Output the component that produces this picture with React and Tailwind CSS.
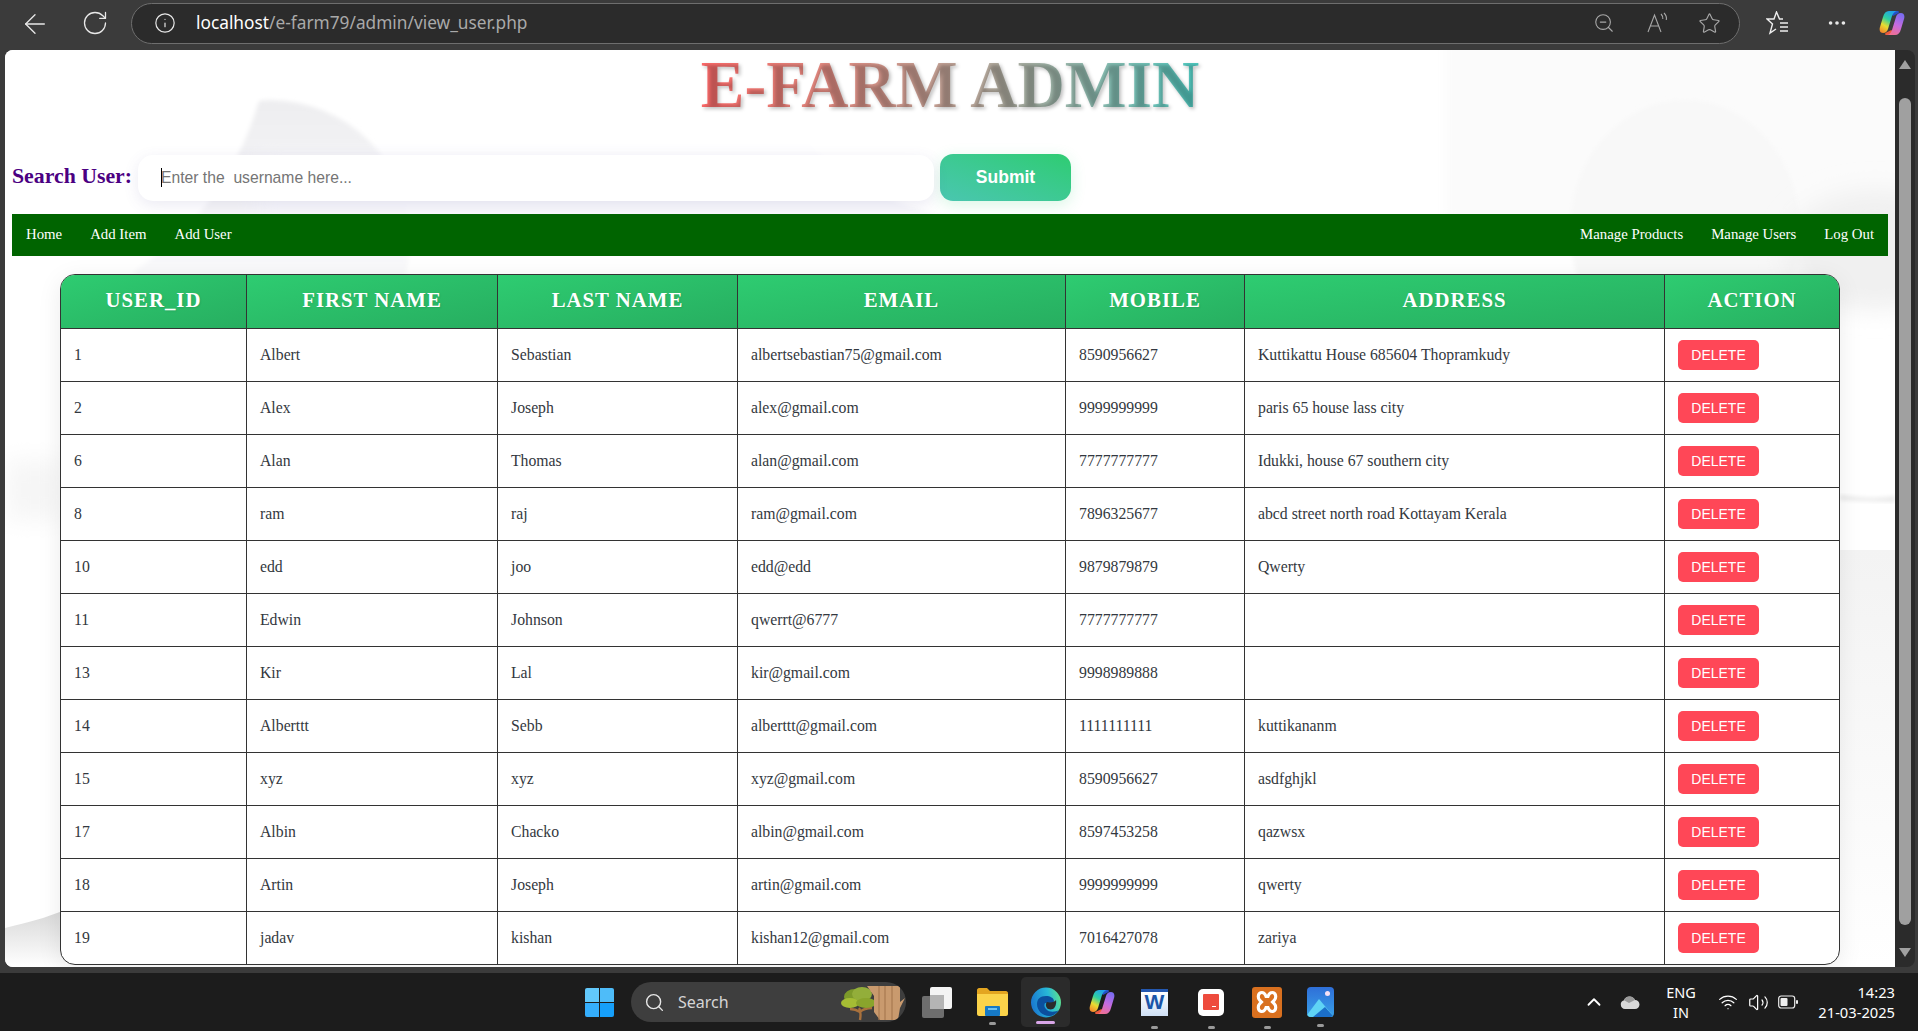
import { ArrowLeft, RotateCw, Info, ZoomOut, Star, MoreHorizontal, ChevronUp, Search, Wifi, Volume2 } from "lucide-react";

const users = [
  ["1", "Albert", "Sebastian", "albertsebastian75@gmail.com", "8590956627", "Kuttikattu House 685604 Thopramkudy"],
  ["2", "Alex", "Joseph", "alex@gmail.com", "9999999999", "paris 65 house lass city"],
  ["6", "Alan", "Thomas", "alan@gmail.com", "7777777777", "Idukki, house 67 southern city"],
  ["8", "ram", "raj", "ram@gmail.com", "7896325677", "abcd street north road Kottayam Kerala"],
  ["10", "edd", "joo", "edd@edd", "9879879879", "Qwerty"],
  ["11", "Edwin", "Johnson", "qwerrt@6777", "7777777777", ""],
  ["13", "Kir", "Lal", "kir@gmail.com", "9998989888", ""],
  ["14", "Alberttt", "Sebb", "alberttt@gmail.com", "1111111111", "kuttikananm"],
  ["15", "xyz", "xyz", "xyz@gmail.com", "8590956627", "asdfghjkl"],
  ["17", "Albin", "Chacko", "albin@gmail.com", "8597453258", "qazwsx"],
  ["18", "Artin", "Joseph", "artin@gmail.com", "9999999999", "qwerty"],
  ["19", "jadav", "kishan", "kishan12@gmail.com", "7016427078", "zariya"],
];

const headers = ["USER_ID", "FIRST NAME", "LAST NAME", "EMAIL", "MOBILE", "ADDRESS", "ACTION"];
const widths = [186, 251, 240, 328, 179, 420, 174];

const Copilot = ({ id, size = 30 }) => (
  <svg width={size} height={size} viewBox="0 0 30 30">
    <defs>
      <linearGradient id={`${id}a`} x1="0.7" y1="0" x2="0.2" y2="1">
        <stop offset="0" stopColor="#1f9df0" />
        <stop offset="0.4" stopColor="#2fd0a0" />
        <stop offset="0.7" stopColor="#e8dc30" />
        <stop offset="1" stopColor="#f58a2a" />
      </linearGradient>
      <linearGradient id={`${id}b`} x1="0.7" y1="0" x2="0.3" y2="1">
        <stop offset="0" stopColor="#7a6cf0" />
        <stop offset="0.5" stopColor="#c56be0" />
        <stop offset="1" stopColor="#f2708f" />
      </linearGradient>
    </defs>
    <path d="M12 3h9c1 0 1 1 .6 2L16 8z" fill="#2450c8" />
    <path d="M18 27H9c-1 0-1-1-.6-2l6-3z" fill="#ee5a3a" />
    <path d="M12 3h9c-3 0-5 2-6 5l-4 13c-.6 2-2 4-5 4-3 0-4-3-3-6l3-10c1-4 3-6 6-6z" fill={`url(#${id}a)`} />
    <path d="M18 27H9c3 0 5-2 6-5l4-13c.6-2 2-4 5-4 3 0 4 3 3 6l-3 10c-1 4-3 6-6 6z" fill={`url(#${id}b)`} />
  </svg>
);

const Dot = ({ className }) => <div className={`absolute w-[7px] h-[3px] rounded-full bg-[#9a9a9a] ${className}`} />;

const TopBar = () => (
  <div className="h-[50px] shrink-0 bg-[#3b3b3b] flex items-center text-[#e8e8e8]">
    <ArrowLeft className="ml-[19px] w-[32px] h-[32px] -mt-[2px]" strokeWidth={1} />
    <RotateCw className="ml-[30px] w-[28px] h-[28px] -mt-[4px]" strokeWidth={1.1} />
    <div className="ml-[22px] h-[41px] w-[1609px] -mt-[4px] rounded-full border border-[#6e6e6e] bg-[#2b2b2b] flex items-center">
      <Info className="ml-[22px] w-[22px] h-[22px]" strokeWidth={1.3} />
      <div className="ml-[20px] text-[17.300px] font-['Noto_Sans',sans-serif] text-[#a9a9a9]">
        <span className="text-white">localhost</span>/e-farm79/admin/view_user.php
      </div>
      <div className="ml-auto flex items-center text-[#a8a8a8]">
        <ZoomOut className="w-[22px] h-[22px]" strokeWidth={1.2} />
        <svg className="ml-[31px]" width="22" height="22" viewBox="0 0 22 22" fill="none" stroke="currentColor" strokeWidth="1.1">
          <path d="M2 20 8.500 3 15 20M4.500 14h8M15 2c1.500 1.500 2 3 1.800 5M18 1c2 2 2.800 4.500 2.300 7" />
        </svg>
        <Star className="ml-[30px] mr-[18px] w-[23px] h-[23px]" strokeWidth={1.2} />
      </div>
    </div>
    <svg className="ml-[26px] -mt-[4px]" width="24" height="24" viewBox="0 0 24 24" fill="none" stroke="#eee" strokeWidth="1.4">
      <path d="M17 8h-3.500L10.500 1 8 8H1l5.500 5L4 22l6-4M14 12h8M14 16h8M14 20h8" />
    </svg>
    <MoreHorizontal className="ml-[36px] w-[22px] h-[22px] -mt-[4px]" strokeWidth={2} />
    <div className="ml-[29px] -mt-[4px]"><Copilot id="top" /></div>
  </div>
);

const Background = () => (
  <svg className="absolute inset-0 w-full h-full" viewBox="0 0 1890 917" preserveAspectRatio="none">
    <defs>
      <filter id="bl" x="-30%" y="-30%" width="160%" height="160%"><feGaussianBlur stdDeviation="12" /></filter>
      <filter id="bs" x="-20%" y="-20%" width="140%" height="140%"><feGaussianBlur stdDeviation="2" /></filter>
      <filter id="bm" x="-20%" y="-20%" width="140%" height="140%"><feGaussianBlur stdDeviation="6" /></filter>
      <linearGradient id="wedge" x1="0" y1="0" x2="0" y2="1">
        <stop offset="0" stopColor="#eeeef0" />
        <stop offset="0.5" stopColor="#f8f8fa" />
        <stop offset="1" stopColor="#fcfcfd" />
      </linearGradient>
      <linearGradient id="rightFade" x1="0" y1="0" x2="0" y2="1">
        <stop offset="0" stopColor="#f3f3f3" />
        <stop offset="1" stopColor="#ffffff" />
      </linearGradient>
      <linearGradient id="leftFade" x1="0" y1="0" x2="0" y2="1">
        <stop offset="0" stopColor="#d8d8d8" />
        <stop offset="1" stopColor="#ffffff" />
      </linearGradient>
    </defs>
    <rect width="1890" height="917" fill="#ffffff" />
    <rect x="1440" y="-20" width="470" height="190" fill="#fbfbfb" filter="url(#bm)" />
    <circle cx="265" cy="190" r="140" fill="url(#wedge)" filter="url(#bs)" />
    <rect x="250" y="110" width="800" height="60" fill="#f7f7fb" filter="url(#bl)" />
    <circle cx="995" cy="-100" r="272" fill="#ffffff" filter="url(#bs)" />
    <circle cx="-35" cy="-30" r="300" fill="#ffffff" filter="url(#bs)" />
    <ellipse cx="1680" cy="180" rx="115" ry="130" fill="#f8f8f8" filter="url(#bs)" />
    <ellipse cx="1870" cy="200" rx="90" ry="60" fill="#f0f0f0" filter="url(#bl)" />
    <rect x="0" y="410" width="60" height="60" fill="#f6f6f6" filter="url(#bl)" />
    <path d="M1835 445 C1850 447 1870 450 1890 446 L1890 452 L1835 450Z" fill="#e8e8e8" filter="url(#bs)" />
    <rect x="1835" y="500" width="55" height="417" fill="url(#rightFade)" />
    <path d="M0 878 C25 872 40 868 60 860 L60 917 L0 917Z" fill="url(#leftFade)" />
  </svg>
);

const Header = () => (
  <div className="relative">
    <div className="h-[104px] flex justify-center">
      <h1 className="h-[68px] scale-x-[0.955] text-[68.500px] leading-[68px] font-bold font-['Liberation_Serif',serif] text-transparent bg-clip-text bg-gradient-to-r from-[#ff6b6b] to-[#4ecdc4] w-fit [text-shadow:2px_2px_4px_rgba(0,0,0,0.25)]">
        E-FARM ADMIN
      </h1>
    </div>
    <div className="flex items-center h-[47px] pl-[7px]">
      <label className="w-[126px] -mt-[2px] text-[21.800px] font-bold text-[#4b0082] font-['Liberation_Serif',serif]">Search User:</label>
      <div className="relative">
        <input
          className="w-[796px] h-[46px] mt-[1px] rounded-[15px] bg-white pl-[23px] text-[15.700px] font-['Liberation_Sans',sans-serif] outline-none shadow-[0_4px_15px_rgba(90,80,160,0.12)] placeholder:text-[#757575]"
          placeholder="Enter the  username here..."
        />
        <div className="absolute left-[23px] top-[14px] w-[1px] h-[19px] bg-black" />
      </div>
      <button className="ml-[6px] w-[131px] h-[47px] rounded-[13px] bg-gradient-to-tr from-[#4ac6b0] to-[#2ecc71] text-white text-[17.500px] font-bold font-['Liberation_Sans',sans-serif] shadow-[0_4px_15px_rgba(46,204,113,0.18)]">
        Submit
      </button>
    </div>
  </div>
);

const Nav = () => (
  <div className="mt-[13px] mx-[7px] h-[42px] pb-[2px] bg-[#006400] text-white text-[14.800px] font-['Liberation_Serif',serif] flex items-center justify-between">
    <div className="flex">
      {["Home", "Add Item", "Add User"].map((n) => (
        <a key={n} className="px-[14px]">{n}</a>
      ))}
    </div>
    <div className="flex">
      {["Manage Products", "Manage Users", "Log Out"].map((n) => (
        <a key={n} className="px-[14px]">{n}</a>
      ))}
    </div>
  </div>
);

const UserTable = () => (
  <div className="mt-[18px] ml-[55px] mr-[55px] border border-[#333] rounded-[15px] overflow-hidden shadow-[0_5px_25px_rgba(0,0,0,0.08)] bg-white">
    <table className="w-full table-fixed border-separate border-spacing-0 font-['Liberation_Serif',serif] text-[15.750px] text-[#333840]">
      <colgroup>
        {widths.map((w, i) => (
          <col key={i} style={{ width: w }} />
        ))}
      </colgroup>
      <thead>
        <tr>
          {headers.map((h, i) => (
            <th
              key={h}
              className={`h-[54px] p-0 pb-[4px] text-[20.800px] font-bold tracking-[1px] text-white text-center border-b border-[#333] bg-gradient-to-br from-[#2ecc71] to-[#27ae60] [text-shadow:1px_1px_2px_rgba(0,0,0,0.1)] ${i < 6 ? "border-r" : ""}`}
            >
              {h}
            </th>
          ))}
        </tr>
      </thead>
      <tbody>
        {users.map((u, r) => (
          <tr key={u[0]}>
            {u.map((c, i) => (
              <td key={i} className={`pl-[13px] border-r border-[#333] ${r < 11 ? "h-[53px] border-b" : "h-[52px]"}`}>
                {c}
              </td>
            ))}
            <td className={`pl-[13px] ${r < 11 ? "h-[53px] border-b border-[#333]" : "h-[52px]"}`}>
              <button className="w-[81px] h-[30px] rounded-[5px] bg-[#ff4757] text-white text-[14px] font-['Liberation_Sans',sans-serif]">
                DELETE
              </button>
            </td>
          </tr>
        ))}
      </tbody>
    </table>
  </div>
);

const Scrollbar = () => (
  <div className="w-[20px] shrink-0 bg-[#2b2b2b] rounded-r-[8px] relative flex flex-col items-center">
    <div className="mt-[10px] w-0 h-0 border-x-[6px] border-x-transparent border-b-[9px] border-b-[#a0a0a0]" />
    <div className="mt-[29px] w-[12px] h-[827px] rounded-full bg-[#a0a0a0]" />
    <div className="mt-[23px] w-0 h-0 border-x-[6px] border-x-transparent border-t-[9px] border-t-[#a0a0a0]" />
  </div>
);

const Taskbar = () => (
  <div className="flex-1 bg-[#1c1c1c] flex items-center relative text-white font-['Noto_Sans',sans-serif]">
    <div className="ml-[585px] grid grid-cols-2 gap-[1px] w-[29px] h-[29px]">
      <div className="bg-[#62c8fb] rounded-tl-[2px]" />
      <div className="bg-[#4ebcf9] rounded-tr-[2px]" />
      <div className="bg-[#35aefc] rounded-bl-[2px]" />
      <div className="bg-[#169ffa] rounded-br-[2px]" />
    </div>
    <div className="ml-[17px] w-[275px] h-[40px] rounded-full bg-[#3e3e3e] flex items-center overflow-hidden">
      <Search className="ml-[13px] w-[21px] h-[21px] text-[#e6e6e6]" strokeWidth={1.6} />
      <span className="ml-[13px] text-[16px] text-[#d5d5d5]">Search</span>
      <svg className="ml-auto" width="68" height="40" viewBox="0 0 68 40">
        <path d="M22 38c1-6 1-9-1-12M22 30c-3-2-7-3-10-3M22 30c3-3 7-4 12-4" stroke="#a9713c" strokeWidth="2.400" fill="none" />
        <ellipse cx="17" cy="15" rx="11" ry="8" fill="#7d9a2a" />
        <ellipse cx="24" cy="12" rx="10" ry="7" fill="#93ae3a" />
        <ellipse cx="12" cy="21" rx="9" ry="5" fill="#a5bd34" />
        <ellipse cx="28" cy="21" rx="10" ry="5" fill="#8aa42c" />
        <path d="M29 4 36 14 36 30 42 38H60L62 26 67 16 62 20 62 4Z" fill="#c99a6e" />
        <path d="M41 4v34M47 4v34M54 4v34" stroke="#a87a50" strokeWidth="1.200" />
      </svg>
    </div>
    <div className="ml-[16px] relative w-[31px] h-[31px]">
      <div className="absolute left-0 bottom-0 w-[22px] h-[22px] rounded-[2px] bg-[#6e6e6e]" />
      <div className="absolute right-[1px] top-0 w-[22px] h-[22px] rounded-[2px] bg-[#f4f4f4]" />
      <div className="absolute left-[8px] top-[8px] w-[14px] h-[14px] bg-[#b4b4b4]" />
    </div>
    <div className="ml-[24px] relative">
      <svg width="31" height="28" viewBox="0 0 31 28">
        <path d="M0 2c0-1 1-2 2-2h8l3 3h16c1 0 2 1 2 2v3H0z" fill="#e3a520" />
        <path d="M0 6h31v20c0 1-1 2-2 2H2c-1 0-2-1-2-2z" fill="#fbd34a" />
        <rect x="8" y="18" width="15" height="10" rx="1" fill="#1679c5" />
        <rect x="11" y="20" width="9" height="2" fill="#6fc2f0" />
      </svg>
      <Dot className="-bottom-[9px] left-[12px]" />
    </div>
    <div className="ml-[13px] relative w-[49px] h-[50px] rounded-[5px] bg-[#2b2b2b] flex items-center justify-center">
      <svg width="30" height="31" viewBox="0 0 30 31">
        <defs>
          <linearGradient id="edge" x1="0" y1="0.500" x2="1" y2="0.300">
            <stop offset="0" stopColor="#1a78d0" />
            <stop offset="0.6" stopColor="#27b8d8" />
            <stop offset="1" stopColor="#5fe08a" />
          </linearGradient>
        </defs>
        <circle cx="15" cy="15.500" r="15" fill="url(#edge)" />
        <path d="M15 9c-6 0-9 3-9 8 0 7 6 12 12 12 4 0 7-2 10-6-3 2-10 3-13-1-2-2-2-4-1-6 3 1 9 0 9-2 0-3-4-5-8-5z" fill="#0b4f9e" />
        <path d="M16 15c3 1 8 0 9-2 .8 4-1 8-3 9-2 .8-5 .5-6-1-1.500-2-1.500-4 0-6z" fill="#2b2b2b" />
      </svg>
      <div className="absolute bottom-[3px] left-[15px] w-[19px] h-[3px] rounded-full bg-[#d9a6e8]" />
    </div>
    <div className="ml-[17px]"><Copilot id="bar" size={30} /></div>
    <div className="ml-[24px] relative w-[27px] h-[27px] bg-gradient-to-b from-[#ffffff] to-[#cfe0f5] border-t-[3px] border-t-[#2458b0] flex items-start justify-center">
      <span className="text-[#1a55a8] text-[21px] leading-[19px] font-bold font-['Liberation_Sans',sans-serif]">W</span>
      <Dot className="-bottom-[13px] left-[10px]" />
    </div>
    <div className="ml-[30px] relative w-[26px] h-[27px] bg-white rounded-[5px] flex items-center justify-center">
      <div className="w-[16px] h-[16px] bg-[#ee4b3d] rounded-[1px] flex items-end justify-end p-[3px]">
        <div className="w-[4px] h-[1px] bg-white" />
      </div>
      <Dot className="-bottom-[13px] left-[10px]" />
    </div>
    <div className="ml-[28px] relative w-[30px] h-[31px] bg-[#d9701f] rounded-[3px] flex items-center justify-center">
      <svg width="24" height="24" viewBox="0 0 26 26" fill="none" stroke="white" strokeWidth="3.400">
        <path d="M6 3c3-1 5 1 6 4h2c1-3 3-5 6-4 3 1 3 6 1 8l-2 2 2 2c2 2 2 7-1 8-3 1-5-1-6-4h-2c-1 3-3 5-6 4-3-1-3-6-1-8l2-2-2-2C3 9 3 4 6 3z" />
      </svg>
      <Dot className="-bottom-[11px] left-[12px]" />
    </div>
    <div className="ml-[25px] relative">
      <div className="relative w-[27px] h-[30px] rounded-[4px] bg-gradient-to-b from-[#2f6fd8] to-[#3aa0e8] overflow-hidden">
        <div className="absolute top-[4px] right-[4px] w-[5px] h-[5px] rounded-full bg-[#f5e0f5]" />
        <svg className="absolute bottom-0 left-0" width="27" height="22" viewBox="0 0 27 22">
          <path d="M0 20 12 4l15 18H0z" fill="#5fd3f5" />
          <path d="M6 22 18 12l9 10z" fill="#1b6fc9" />
        </svg>
      </div>
      <Dot className="-bottom-[10px] left-[10px]" />
    </div>
    <div className="ml-auto mr-[23px] flex items-center">
      <ChevronUp className="w-[22px] h-[22px]" strokeWidth={2} />
      <svg className="ml-[15px]" width="20" height="14" viewBox="0 0 20 14">
        <path d="M5 14a4.500 4.500 0 0 1-1-8.800A6 6 0 0 1 15 5a4.500 4.500 0 0 1 0 9z" fill="#d8d8d8" />
        <path d="M4 5.200A6 6 0 0 1 15 5l-6 3z" fill="#9a9a9a" />
      </svg>
      <div className="ml-[23px] w-[36px] text-center text-[14.500px] leading-[20px]">ENG<br />IN</div>
      <Wifi className="ml-[19px] w-[20px] h-[20px]" strokeWidth={1.5} />
      <Volume2 className="ml-[10px] w-[21px] h-[21px]" strokeWidth={1.4} />
      <svg className="ml-[9px]" width="20" height="14" viewBox="0 0 20 14">
        <rect x="0.700" y="1" width="16" height="12" rx="2.500" fill="none" stroke="#eee" strokeWidth="1.2" />
        <rect x="2.500" y="3" width="7" height="8" rx="1" fill="#eee" />
        <rect x="18" y="5" width="2" height="4" rx="1" fill="#eee" />
      </svg>
      <div className="ml-[19px] w-[78px] text-right text-[14.700px] leading-[20px]">14:23<br />21-03-2025</div>
    </div>
  </div>
);

export default function App() {
  return (
    <div className="h-[1031px] w-full flex flex-col overflow-hidden bg-[#3b3b3b]">
      <TopBar />
      <div className="h-[917px] shrink-0 flex pl-[5px] pr-[3px]">
        <div className="relative flex-1 rounded-l-[8px] overflow-hidden">
          <Background />
          <div className="relative">
            <Header />
            <Nav />
            <UserTable />
          </div>
        </div>
        <Scrollbar />
      </div>
      <div className="h-[6px] shrink-0" />
      <Taskbar />
    </div>
  );
}
